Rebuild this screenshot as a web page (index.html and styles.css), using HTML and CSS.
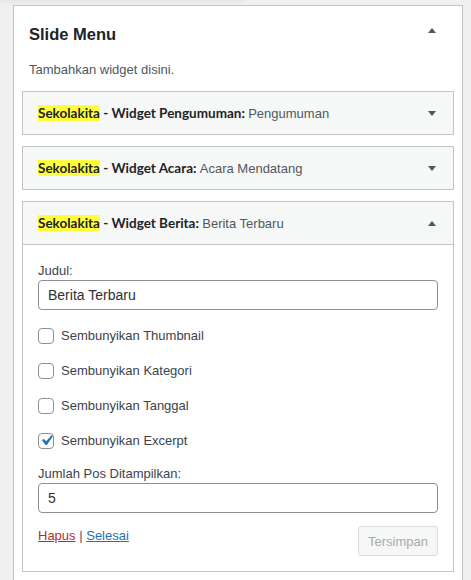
FILE: index.html
```html
<!DOCTYPE html>
<html lang="id">
<head>
<meta charset="utf-8">
<title>Slide Menu</title>
<link rel="stylesheet" href="styles.css">
</head>
<body>
<div class="topshadow"></div>
<div class="sidebar">
  <div class="sidebar-name">
    <h2>Slide Menu</h2>
    <span class="arrow up"></span>
  </div>
  <p class="sidebar-desc">Tambahkan widget disini.</p>

  <div class="widget">
    <div class="widget-top">
      <h3><mark>Sekolakita</mark> - Widget Pengumuman: <span class="in-title">Pengumuman</span></h3>
      <span class="arrow down"></span>
    </div>
  </div>

  <div class="widget">
    <div class="widget-top">
      <h3><mark>Sekolakita</mark> - Widget Acara: <span class="in-title">Acara Mendatang</span></h3>
      <span class="arrow down"></span>
    </div>
  </div>

  <div class="widget open">
    <div class="widget-top">
      <h3><mark>Sekolakita</mark> - Widget Berita: <span class="in-title">Berita Terbaru</span></h3>
      <span class="arrow up"></span>
    </div>
    <div class="widget-inside">
      <div class="field">
        <label class="lbl">Judul:</label>
        <div class="input">Berita Terbaru</div>
      </div>
      <div class="checks">
        <div class="check"><span class="box"></span><span>Sembunyikan Thumbnail</span></div>
        <div class="check"><span class="box"></span><span>Sembunyikan Kategori</span></div>
        <div class="check"><span class="box"></span><span>Sembunyikan Tanggal</span></div>
        <div class="check"><span class="box checked"><svg viewBox="0 0 20 20" width="21" height="21"><path d="M14.83 4.89l1.34.94-5.81 8.38H9.02L5.78 9.67l1.34-1.25 2.57 2.4z" fill="#2271b1"/></svg></span><span>Sembunyikan Excerpt</span></div>
      </div>
      <div class="field num">
        <label class="lbl">Jumlah Pos Ditampilkan:</label>
        <div class="input">5</div>
      </div>
      <div class="actions">
        <div class="links"><a class="del">Hapus</a> <span class="sep">|</span> <a class="done">Selesai</a></div>
        <span class="btn">Tersimpan</span>
      </div>
    </div>
  </div>
</div>
</body>
</html>
```
FILE: styles.css
```css
html, body {
  margin: 0;
  padding: 0;
  background: #f0f0f1;
  font-family: "Liberation Sans", Arial, sans-serif;
  font-size: 13px;
  color: #3c434a;
}
.topshadow {
  width: 245px;
  height: 1px;
  background: #e6e6e6;
  box-shadow: 0 1px 4px rgba(0,0,0,0.12);
}
.sidebar {
  margin: 4px 8px 0 13px;
  background: #fff;
  border: 1px solid #c3c4c7;
  border-bottom: none;
  padding: 0 8px 10px;
  height: 600px;
  box-sizing: border-box;
}
.sidebar-name {
  display: flex;
  align-items: center;
  justify-content: space-between;
  padding: 17px 18px 0 7px;
}
.sidebar-name h2 {
  margin: 0;
  font-size: 16.5px;
  font-weight: bold;
  line-height: 22px;
  color: #1d2327;
}
.arrow {
  width: 0;
  height: 0;
  border-left: 4px solid transparent;
  border-right: 4px solid transparent;
}
.arrow.up { border-bottom: 5px solid #50575e; }
.arrow.down { border-top: 5px solid #50575e; }
.sidebar-name .arrow { margin-top: -7px; }
.sidebar-desc {
  margin: 16px 0 0 7px;
  line-height: 18px;
  color: #50575e;
}
.widget {
  margin-top: 11px;
  border: 1px solid #c3c4c7;
  background: #f6f7f7;
}
.sidebar-desc + .widget { margin-top: 12px; }
.widget-top {
  height: 42px;
  display: flex;
  align-items: center;
  justify-content: space-between;
  padding: 0 17px 0 15px;
}
.widget-top h3 {
  margin: 0;
  font-family: Lato, "Liberation Sans", sans-serif;
  font-size: 13.5px;
  font-weight: 700;
  color: #1d2327;
  line-height: 18px;
}
mark {
  background: #ffff3b;
  color: #1d2327;
}
.in-title {
  font-family: "Liberation Sans", Arial, sans-serif;
  font-size: 13px;
  font-weight: normal;
  color: #50575e;
}
.widget-inside {
  background: #fff;
  border-top: 1px solid #c3c4c7;
  padding: 17px 15px 15px;
}
.lbl {
  display: block;
  line-height: 18px;
  color: #3c434a;
}
.input {
  height: 30px;
  box-sizing: border-box;
  border: 1px solid #8c8f94;
  border-radius: 4px;
  padding: 0 9px;
  display: flex;
  align-items: center;
  font-size: 14px;
  color: #2c3338;
  background: #fff;
}
.checks {
  margin-top: 8px;
}
.check {
  height: 35px;
  display: flex;
  align-items: center;
  gap: 7px;
  color: #3c434a;
}
.box {
  width: 16px;
  height: 16px;
  box-sizing: border-box;
  border: 1px solid #8c8f94;
  border-radius: 4px;
  background: #fff;
  display: flex;
  align-items: center;
  justify-content: center;
}
.box.checked svg { margin: -3px; flex: none; }
.field.num { margin-top: 7px; }
.actions {
  margin-top: 13px;
  display: flex;
  justify-content: space-between;
  align-items: flex-start;
}
.links {
  line-height: 20px;
  color: #50575e;
}
.links a { text-decoration: underline; }
.del { color: #b32d2e; }
.done { color: #2271b1; }
.btn {
  width: 80px;
  height: 30px;
  box-sizing: border-box;
  display: flex;
  align-items: center;
  justify-content: center;
  border: 1px solid #dcdcde;
  border-radius: 3px;
  background: #f6f7f7;
  color: #a7aaad;
  font-size: 13px;
}
```
